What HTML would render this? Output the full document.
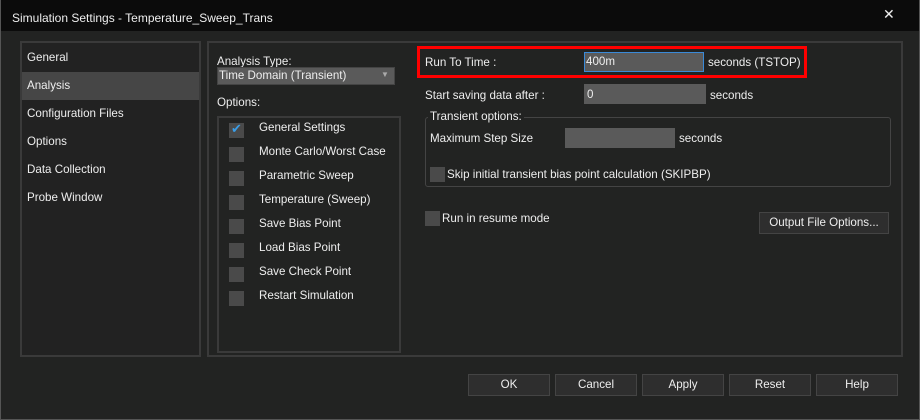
<!DOCTYPE html><html><head><style>
*{margin:0;padding:0;box-sizing:border-box}
body{width:920px;height:420px;background:#222322;font-family:"Liberation Sans",sans-serif;font-size:11.6px;color:#eee;position:relative;overflow:hidden}
.a{position:absolute;white-space:nowrap}
.frame{position:absolute;left:0;top:0;width:920px;height:420px;border:1px solid #555;border-top:none;pointer-events:none}
.tb{left:0;top:0;width:920px;height:31px;background:#0b0b0b}
.box{background:#5a5a5a}
.cb{position:absolute;width:15px;height:15px;background:#4a4a4a}
.btn{position:absolute;top:374px;width:82px;height:22px;background:#2e2e2e;border:1px solid #444;text-align:center;line-height:20px}
</style></head><body>
<div class="a tb"></div>
<div class="a" style="left:12px;top:11px;font-size:12px">Simulation Settings - Temperature_Sweep_Trans</div>
<div class="a" style="left:883px;top:6px;font-size:14px">✕</div>
<div class="a" style="left:20px;top:41px;width:181px;height:316px;border:2px solid #3a3a3a;background:#222"></div>
<div class="a" style="left:22px;top:72px;width:177px;height:28px;background:#464646"></div>
<div class="a" style="left:27px;top:51px">General</div>
<div class="a" style="left:27px;top:79px">Analysis</div>
<div class="a" style="left:27px;top:107px">Configuration Files</div>
<div class="a" style="left:27px;top:135px">Options</div>
<div class="a" style="left:27px;top:163px">Data Collection</div>
<div class="a" style="left:27px;top:191px">Probe Window</div>
<div class="a" style="left:207px;top:41px;width:696px;height:316px;border:2px solid #3a3a3a"></div>
<div class="a" style="left:217px;top:55px">Analysis Type:</div>
<div class="a box" style="left:217px;top:67px;width:178px;height:18px;border:1px solid #444"></div>
<div class="a" style="left:219px;top:69px">Time Domain (Transient)</div>
<div class="a" style="left:381px;top:70px;font-size:8px;color:#aaa">▼</div>
<div class="a" style="left:217px;top:96px">Options:</div>
<div class="a" style="left:217px;top:116px;width:184px;height:237px;border:2px solid #3a3a3a"></div>
<div class="cb" style="left:229px;top:123px"></div><div class="a" style="left:231px;top:121px;color:#3a9ee8;font-size:13px">✔</div>
<div class="a" style="left:259px;top:121px">General Settings</div>
<div class="cb" style="left:229px;top:147px"></div><div class="a" style="left:259px;top:145px">Monte Carlo/Worst Case</div>
<div class="cb" style="left:229px;top:171px"></div><div class="a" style="left:259px;top:169px">Parametric Sweep</div>
<div class="cb" style="left:229px;top:195px"></div><div class="a" style="left:259px;top:193px">Temperature (Sweep)</div>
<div class="cb" style="left:229px;top:219px"></div><div class="a" style="left:259px;top:217px">Save Bias Point</div>
<div class="cb" style="left:229px;top:243px"></div><div class="a" style="left:259px;top:241px">Load Bias Point</div>
<div class="cb" style="left:229px;top:267px"></div><div class="a" style="left:259px;top:265px">Save Check Point</div>
<div class="cb" style="left:229px;top:291px"></div><div class="a" style="left:259px;top:289px">Restart Simulation</div>
<div class="a" style="left:417px;top:46px;width:390px;height:32px;border:3px solid #f00"></div>
<div class="a" style="left:425px;top:56px">Run To Time :</div>
<div class="a box" style="left:584px;top:52px;width:120px;height:20px;border:1px solid #3a8ad8"></div>
<div class="a" style="left:586px;top:55px">400m</div>
<div class="a" style="left:708px;top:56px">seconds (TSTOP)</div>
<div class="a" style="left:425px;top:89px">Start saving data after :</div>
<div class="a box" style="left:584px;top:84px;width:122px;height:20px"></div>
<div class="a" style="left:587px;top:88px">0</div>
<div class="a" style="left:710px;top:89px">seconds</div>
<div class="a" style="left:425px;top:117px;width:466px;height:70px;border:1px solid #444;border-radius:3px"></div>
<div class="a" style="left:428px;top:110px;background:#222322;padding:0 2px">Transient options:</div>
<div class="a" style="left:430px;top:132px">Maximum Step Size</div>
<div class="a box" style="left:565px;top:128px;width:110px;height:20px"></div>
<div class="a" style="left:679px;top:132px">seconds</div>
<div class="cb" style="left:430px;top:167px;width:15px"></div>
<div class="a" style="left:447px;top:168px">Skip initial transient bias point calculation (SKIPBP)</div>
<div class="cb" style="left:425px;top:211px"></div>
<div class="a" style="left:442px;top:212px">Run in resume mode</div>
<div class="a" style="left:759px;top:212px;width:130px;height:22px;background:#2e2e2e;border:1px solid #444;text-align:center;line-height:20px">Output File Options...</div>
<div class="btn" style="left:468px">OK</div>
<div class="btn" style="left:555px">Cancel</div>
<div class="btn" style="left:642px">Apply</div>
<div class="btn" style="left:729px">Reset</div>
<div class="btn" style="left:816px">Help</div>
<div class="frame"></div>
</body></html>
